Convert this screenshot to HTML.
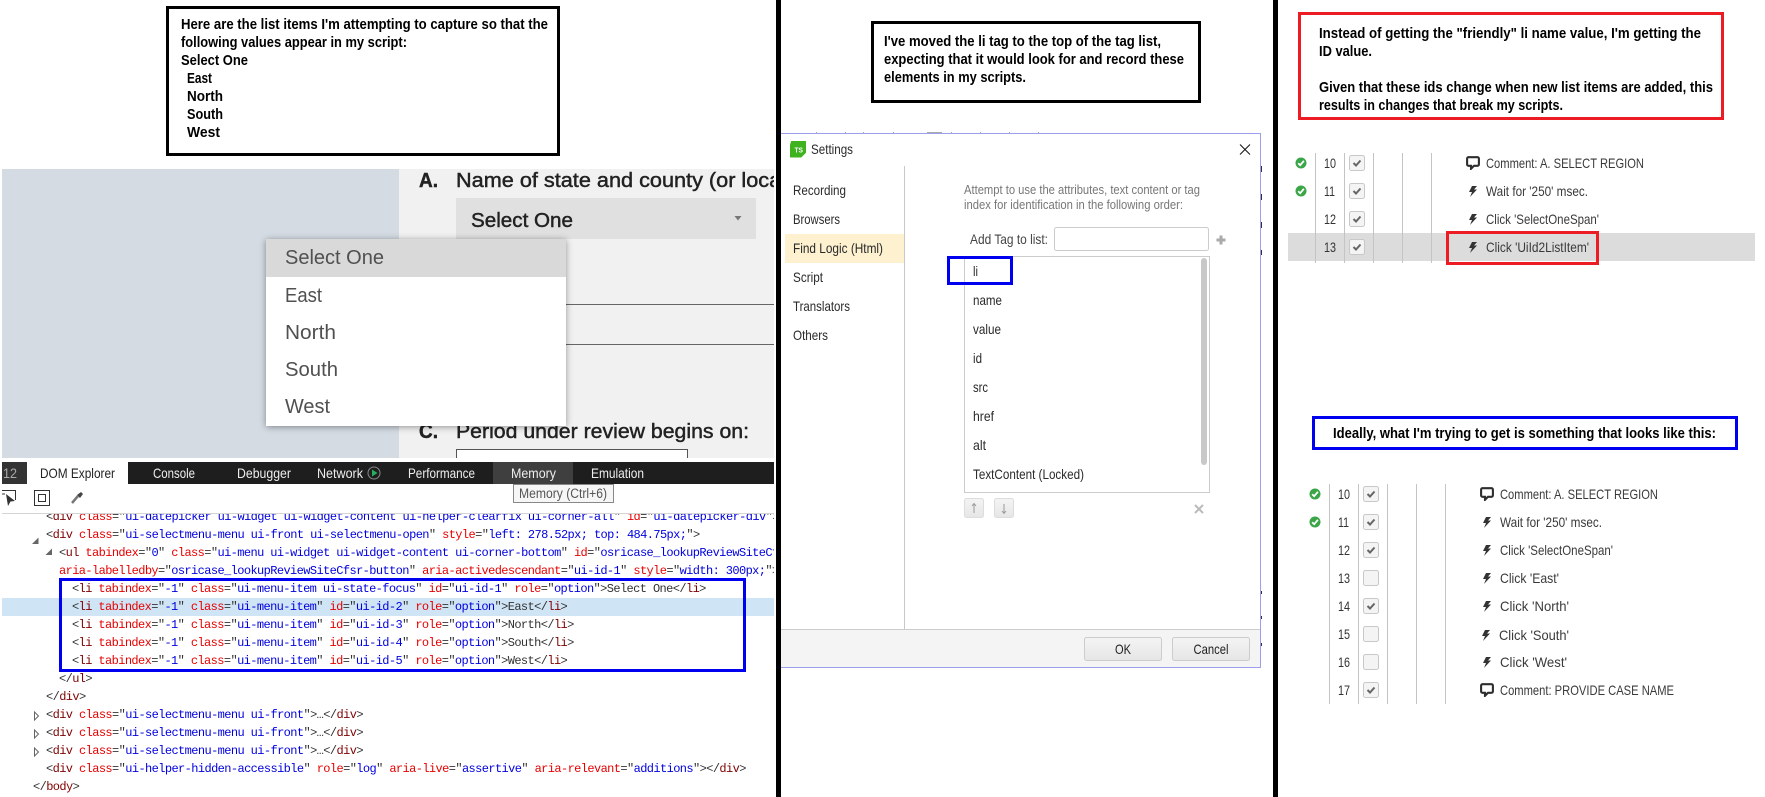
<!DOCTYPE html>
<html><head><meta charset="utf-8"><title>Screenshot</title>
<style>
html,body{margin:0;padding:0;background:#fff;width:1765px;height:797px;overflow:hidden}
svg{display:block;position:absolute;left:0;top:0}
text{font-family:"Liberation Sans",sans-serif;white-space:pre}
.b{font-weight:bold;font-size:15px;fill:#000}
.m{font-family:"Liberation Mono",monospace;font-size:12px;letter-spacing:-.6px;fill:#333}
.t{fill:#800000}.a{fill:#e80000}.v{fill:#0000e0}
.f{font-size:20px;fill:#222;stroke:#222;stroke-width:.45}
.d{font-size:20.5px;fill:#505050}
.w{font-size:14px;fill:#eee}
.s{font-size:14px;fill:#2a2a2a}
.n{font-size:14px;fill:#333}
.st{font-size:14px;fill:#3a3a3a}
</style></head><body>
<svg width="1765" height="797" viewBox="0 0 1765 797" xmlns="http://www.w3.org/2000/svg">
<defs>
<clipPath id="cl"><rect x="0" y="0" width="774" height="797"/></clipPath>
<clipPath id="cc"><rect x="0" y="514" width="774" height="283"/></clipPath>
<symbol id="bub" width="14" height="14" viewBox="0 0 14 14"><path d="M2.5 1.2h9A1.4 1.4 0 0 1 12.9 2.6v5.800A1.400 1.400 0 0 1 11.500 9.800H8l-3 3v-3H2.500A1.400 1.400 0 0 1 1.100 8.400V2.600A1.400 1.400 0 0 1 2.500 1.200z" fill="#fff" stroke="#2e2e2e" stroke-width="2.100"/></symbol>
<symbol id="bolt" width="8" height="11" viewBox="0 0 8 11"><polygon points="3,0 8,0 5,3.500 8,3.500 1,11 3,6 0,6" fill="#333"/></symbol>
<symbol id="ok" width="12" height="12" viewBox="0 0 12 12"><circle cx="6" cy="6" r="5.500" fill="#3aa648"/><polyline points="3.200,6.200 5.200,8.200 8.900,3.800" fill="none" stroke="#fff" stroke-width="1.800"/></symbol>
<symbol id="cb" width="16" height="16" viewBox="0 0 16 16"><rect x=".5" y=".5" width="15" height="15" rx="2" fill="#f4f4f4" stroke="#c8c8c8"/></symbol>
<symbol id="cbc" width="16" height="16" viewBox="0 0 16 16"><rect x=".5" y=".5" width="15" height="15" rx="2" fill="#f4f4f4" stroke="#c8c8c8"/><polyline points="4.500,8 7,10.500 11.500,5.500" fill="none" stroke="#666" stroke-width="2"/></symbol>
<linearGradient id="g" x1="0" y1="0" x2="0" y2="1"><stop offset="0" stop-color="#f4f4f4"/><stop offset="1" stop-color="#e6e6e6"/></linearGradient>
<filter id="sh" x="-10%" y="-10%" width="120%" height="120%"><feDropShadow dx="0" dy="1" stdDeviation="3.500" flood-color="#000" flood-opacity=".4"/></filter>
</defs>

<!-- separators -->
<rect x="776" y="0" width="5" height="797" fill="#000"/>
<rect x="1273" y="0" width="5" height="797" fill="#000"/>

<!-- Box 1 -->
<rect x="167.500" y="7.500" width="391" height="147" fill="#fff" stroke="#000" stroke-width="3"/>
<text class="b" x="181" y="29" textLength="367" lengthAdjust="spacingAndGlyphs">Here are the list items I'm attempting to capture so that the</text>
<text class="b" x="181" y="47" textLength="226" lengthAdjust="spacingAndGlyphs">following values appear in my script:</text>
<text class="b" x="181" y="65" textLength="67" lengthAdjust="spacingAndGlyphs">Select One</text>
<text class="b" x="187" y="83" textLength="25" lengthAdjust="spacingAndGlyphs">East</text>
<text class="b" x="187" y="101" textLength="36" lengthAdjust="spacingAndGlyphs">North</text>
<text class="b" x="187" y="119" textLength="36" lengthAdjust="spacingAndGlyphs">South</text>
<text class="b" x="187" y="137" textLength="33" lengthAdjust="spacingAndGlyphs">West</text>

<!-- page mock -->
<rect x="2" y="169" width="397" height="289" fill="#d4dbe3"/>
<rect x="399" y="169" width="375" height="289" fill="#f1f1f1"/>
<g clip-path="url(#cl)">
<text class="f" x="419" y="187" style="font-weight:bold" textLength="19" lengthAdjust="spacingAndGlyphs">A.</text>
<text class="f" x="456" y="187" textLength="330" lengthAdjust="spacingAndGlyphs">Name of state and county (or local</text>
<rect x="456" y="198" width="300" height="41" fill="#e0e0e0"/>
<text class="f" x="471" y="227" textLength="102" lengthAdjust="spacingAndGlyphs">Select One</text>
<polygon points="734.500,216 741.500,216 738,220.500" fill="#777"/>
<rect x="566" y="304" width="208" height="1" fill="#666"/>
<rect x="566" y="344" width="208" height="1" fill="#666"/>
<text class="f" x="419" y="438" style="font-weight:bold" textLength="19" lengthAdjust="spacingAndGlyphs">C.</text>
<text class="f" x="456" y="438" textLength="293" lengthAdjust="spacingAndGlyphs">Period under review begins on:</text>
<path d="M456.500 458V449.500H687.500V458" fill="#fff" stroke="#555"/>
</g>
<rect x="266" y="239" width="300" height="187" fill="#fff" filter="url(#sh)"/>
<rect x="266" y="239" width="300" height="38" fill="#d9d9d9"/>
<text class="d" x="285" y="264" textLength="99" lengthAdjust="spacingAndGlyphs">Select One</text>
<text class="d" x="285" y="302" textLength="37" lengthAdjust="spacingAndGlyphs">East</text>
<text class="d" x="285" y="339" textLength="51" lengthAdjust="spacingAndGlyphs">North</text>
<text class="d" x="285" y="376" textLength="53" lengthAdjust="spacingAndGlyphs">South</text>
<text class="d" x="285" y="413" textLength="45" lengthAdjust="spacingAndGlyphs">West</text>

<!-- F12 tabs -->
<rect x="2" y="462" width="772" height="22" fill="#1e1e1e"/>
<rect x="2" y="462" width="25" height="22" fill="#333"/>
<text class="w" x="3" y="478" textLength="14" lengthAdjust="spacingAndGlyphs" style="fill:#aaa">12</text>
<rect x="27" y="462" width="101" height="22" fill="#fff"/>
<text class="s" x="40" y="478" textLength="75" lengthAdjust="spacingAndGlyphs" style="fill:#222">DOM Explorer</text>
<text class="w" x="153" y="478" textLength="42" lengthAdjust="spacingAndGlyphs">Console</text>
<text class="w" x="237" y="478" textLength="54" lengthAdjust="spacingAndGlyphs">Debugger</text>
<text class="w" x="317" y="478" textLength="46" lengthAdjust="spacingAndGlyphs">Network</text>
<circle cx="374" cy="473" r="6" fill="none" stroke="#888"/>
<polygon points="372,469.500 372,476.500 377.500,473" fill="#27ae60"/>
<text class="w" x="408" y="478" textLength="67" lengthAdjust="spacingAndGlyphs">Performance</text>
<rect x="493" y="462" width="80" height="22" fill="#3f3f3f"/>
<text class="w" x="511" y="478" textLength="45" lengthAdjust="spacingAndGlyphs">Memory</text>
<text class="w" x="591" y="478" textLength="53" lengthAdjust="spacingAndGlyphs">Emulation</text>
<rect x="513.500" y="484.500" width="100" height="18" fill="#f6f6f6" stroke="#888"/>
<text x="519" y="498" font-size="13.500" fill="#555" textLength="88" lengthAdjust="spacingAndGlyphs">Memory (Ctrl+6)</text>

<!-- toolbar icons -->
<path d="M2 490.500H15.500V500" fill="none" stroke="#333"/>
<path d="M2 494H5" stroke="#333" fill="none"/>
<polygon points="6,494 15,501 10.500,501.500 8,506" fill="#333"/>
<rect x="34.500" y="490.500" width="15" height="15" fill="none" stroke="#333"/>
<rect x="38.500" y="494.500" width="7" height="7" fill="none" stroke="#333"/>
<path d="M72 503l6-7" stroke="#777" stroke-width="2.500" fill="none"/>
<path d="M77 495l4-3 2 2-3 4z" fill="#444"/>
<rect x="2" y="513" width="772" height="1" fill="#d4d4d4"/>

<!-- DOM tree -->
<rect x="2" y="598" width="772" height="18" fill="#cfe4f4"/>
<g clip-path="url(#cc)">
<text class="m" x="46" y="520">&lt;<tspan class="t">div</tspan> <tspan class="a">class</tspan>="<tspan class="v">ui-datepicker ui-widget ui-widget-content ui-helper-clearfix ui-corner-all</tspan>" <tspan class="a">id</tspan>="<tspan class="v">ui-datepicker-div</tspan>"&gt;</text>
<polygon points="32,544 38.500,537.500 38.500,544" fill="#666"/>
<text class="m" x="46" y="538">&lt;<tspan class="t">div</tspan> <tspan class="a">class</tspan>="<tspan class="v">ui-selectmenu-menu ui-front ui-selectmenu-open</tspan>" <tspan class="a">style</tspan>="<tspan class="v">left: 278.52px; top: 484.75px;</tspan>"&gt;</text>
<polygon points="45.500,555 52,548.500 52,555" fill="#666"/>
<text class="m" x="59" y="556">&lt;<tspan class="t">ul</tspan> <tspan class="a">tabindex</tspan>="<tspan class="v">0</tspan>" <tspan class="a">class</tspan>="<tspan class="v">ui-menu ui-widget ui-widget-content ui-corner-bottom</tspan>" <tspan class="a">id</tspan>="<tspan class="v">osricase_lookupReviewSiteCfsr-menu</tspan>"</text>
<text class="m" x="59" y="574"><tspan class="a">aria-labelledby</tspan>="<tspan class="v">osricase_lookupReviewSiteCfsr-button</tspan>" <tspan class="a">aria-activedescendant</tspan>="<tspan class="v">ui-id-1</tspan>" <tspan class="a">style</tspan>="<tspan class="v">width: 300px;</tspan>"&gt;</text>
<text class="m" x="72" y="592">&lt;<tspan class="t">li</tspan> <tspan class="a">tabindex</tspan>="<tspan class="v">-1</tspan>" <tspan class="a">class</tspan>="<tspan class="v">ui-menu-item ui-state-focus</tspan>" <tspan class="a">id</tspan>="<tspan class="v">ui-id-1</tspan>" <tspan class="a">role</tspan>="<tspan class="v">option</tspan>"&gt;Select One&lt;/<tspan class="t">li</tspan>&gt;</text>
<text class="m" x="72" y="610">&lt;<tspan class="t">li</tspan> <tspan class="a">tabindex</tspan>="<tspan class="v">-1</tspan>" <tspan class="a">class</tspan>="<tspan class="v">ui-menu-item</tspan>" <tspan class="a">id</tspan>="<tspan class="v">ui-id-2</tspan>" <tspan class="a">role</tspan>="<tspan class="v">option</tspan>"&gt;East&lt;/<tspan class="t">li</tspan>&gt;</text>
<text class="m" x="72" y="628">&lt;<tspan class="t">li</tspan> <tspan class="a">tabindex</tspan>="<tspan class="v">-1</tspan>" <tspan class="a">class</tspan>="<tspan class="v">ui-menu-item</tspan>" <tspan class="a">id</tspan>="<tspan class="v">ui-id-3</tspan>" <tspan class="a">role</tspan>="<tspan class="v">option</tspan>"&gt;North&lt;/<tspan class="t">li</tspan>&gt;</text>
<text class="m" x="72" y="646">&lt;<tspan class="t">li</tspan> <tspan class="a">tabindex</tspan>="<tspan class="v">-1</tspan>" <tspan class="a">class</tspan>="<tspan class="v">ui-menu-item</tspan>" <tspan class="a">id</tspan>="<tspan class="v">ui-id-4</tspan>" <tspan class="a">role</tspan>="<tspan class="v">option</tspan>"&gt;South&lt;/<tspan class="t">li</tspan>&gt;</text>
<text class="m" x="72" y="664">&lt;<tspan class="t">li</tspan> <tspan class="a">tabindex</tspan>="<tspan class="v">-1</tspan>" <tspan class="a">class</tspan>="<tspan class="v">ui-menu-item</tspan>" <tspan class="a">id</tspan>="<tspan class="v">ui-id-5</tspan>" <tspan class="a">role</tspan>="<tspan class="v">option</tspan>"&gt;West&lt;/<tspan class="t">li</tspan>&gt;</text>
<text class="m" x="59" y="682">&lt;/<tspan class="t">ul</tspan>&gt;</text>
<text class="m" x="46" y="700">&lt;/<tspan class="t">div</tspan>&gt;</text>
<polygon points="34.500,712 38.500,716 34.500,720" fill="none" stroke="#666"/>
<text class="m" x="46" y="718">&lt;<tspan class="t">div</tspan> <tspan class="a">class</tspan>="<tspan class="v">ui-selectmenu-menu ui-front</tspan>"&gt;…&lt;/<tspan class="t">div</tspan>&gt;</text>
<polygon points="34.500,730 38.500,734 34.500,738" fill="none" stroke="#666"/>
<text class="m" x="46" y="736">&lt;<tspan class="t">div</tspan> <tspan class="a">class</tspan>="<tspan class="v">ui-selectmenu-menu ui-front</tspan>"&gt;…&lt;/<tspan class="t">div</tspan>&gt;</text>
<polygon points="34.500,748 38.500,752 34.500,756" fill="none" stroke="#666"/>
<text class="m" x="46" y="754">&lt;<tspan class="t">div</tspan> <tspan class="a">class</tspan>="<tspan class="v">ui-selectmenu-menu ui-front</tspan>"&gt;…&lt;/<tspan class="t">div</tspan>&gt;</text>
<text class="m" x="46" y="772">&lt;<tspan class="t">div</tspan> <tspan class="a">class</tspan>="<tspan class="v">ui-helper-hidden-accessible</tspan>" <tspan class="a">role</tspan>="<tspan class="v">log</tspan>" <tspan class="a">aria-live</tspan>="<tspan class="v">assertive</tspan>" <tspan class="a">aria-relevant</tspan>="<tspan class="v">additions</tspan>"&gt;&lt;/<tspan class="t">div</tspan>&gt;</text>
<text class="m" x="33" y="790">&lt;/<tspan class="t">body</tspan>&gt;</text>
</g>
<rect x="60.500" y="579.500" width="684" height="91" fill="none" stroke="#0000f0" stroke-width="3"/>

<!-- Box 2 -->
<rect x="872.500" y="22.500" width="327" height="79" fill="#fff" stroke="#000" stroke-width="3"/>
<text class="b" x="884" y="46" textLength="277" lengthAdjust="spacingAndGlyphs">I've moved the li tag to the top of the tag list,</text>
<text class="b" x="884" y="64" textLength="300" lengthAdjust="spacingAndGlyphs">expecting that it would look for and record these</text>
<text class="b" x="884" y="82" textLength="142" lengthAdjust="spacingAndGlyphs">elements in my scripts.</text>

<!-- Settings dialog -->
<path d="M781 133.500H1260.500V667.500H781" fill="#fff" stroke="#9c9ef0"/>
<g fill="#aaa">
<rect x="816" y="132" width="1" height="1"/><rect x="845" y="132" width="1" height="1"/><rect x="863" y="132" width="1" height="1"/><rect x="893" y="132" width="1" height="1"/><rect x="927" y="132" width="15" height="1"/><rect x="951" y="132" width="1" height="1"/><rect x="980" y="132" width="1" height="1"/><rect x="1009" y="132" width="1" height="1"/><rect x="1038" y="132" width="1" height="1"/>
</g>
<g fill="#333">
<rect x="1261" y="166" width="1" height="6"/><rect x="1261" y="194" width="1" height="6"/><rect x="1261" y="222" width="1" height="6"/><rect x="1261" y="250" width="1" height="5"/><rect x="1261" y="591" width="1" height="3"/><rect x="1261" y="616" width="1" height="3"/><rect x="1261" y="643" width="1" height="3"/>
</g>
<path d="M791.500 141.500h14v11l-4.500 4.500H790.500v-12z" fill="#3fb31f" stroke="#3fb31f" stroke-linejoin="round"/>
<text x="794.500" y="152.500" font-size="7.500" font-weight="bold" fill="#fff" textLength="8.500" lengthAdjust="spacingAndGlyphs">TS</text>
<text class="s" x="811" y="154" textLength="42" lengthAdjust="spacingAndGlyphs">Settings</text>
<path d="M1240 144.500l10 10M1250 144.500l-10 10" stroke="#111" stroke-width="1" fill="none"/>
<rect x="904" y="166" width="1" height="463" fill="#c8c8c8"/>
<rect x="785" y="234" width="119" height="29" fill="#fdf1d0"/>
<text class="s" x="793" y="195" textLength="53" lengthAdjust="spacingAndGlyphs">Recording</text>
<text class="s" x="793" y="224" textLength="47" lengthAdjust="spacingAndGlyphs">Browsers</text>
<text class="s" x="793" y="253" textLength="90" lengthAdjust="spacingAndGlyphs">Find Logic (Html)</text>
<text class="s" x="793" y="282" textLength="30" lengthAdjust="spacingAndGlyphs">Script</text>
<text class="s" x="793" y="311" textLength="57" lengthAdjust="spacingAndGlyphs">Translators</text>
<text class="s" x="793" y="340" textLength="35" lengthAdjust="spacingAndGlyphs">Others</text>
<text x="964" y="194" font-size="13" fill="#777" textLength="236" lengthAdjust="spacingAndGlyphs">Attempt to use the attributes, text content or tag</text>
<text x="964" y="209" font-size="13" fill="#777" textLength="219" lengthAdjust="spacingAndGlyphs">index for identification in the following order:</text>
<text class="s" x="970" y="244" textLength="78" lengthAdjust="spacingAndGlyphs" style="fill:#444">Add Tag to list:</text>
<rect x="1054.500" y="227.500" width="154" height="23" rx="2" fill="#fff" stroke="#ccc"/>
<path d="M1221 235.500v9M1216.500 240h9" stroke="#aaa" stroke-width="3" fill="none"/>
<rect x="964.500" y="256.500" width="245" height="236" fill="#fff" stroke="#ccc"/>
<rect x="1201" y="258" width="6" height="207" rx="3" fill="#c8c8c8"/>
<rect x="948.500" y="257.500" width="63" height="26" fill="none" stroke="#0000f0" stroke-width="3"/>
<text class="s" x="973" y="276" textLength="5" lengthAdjust="spacingAndGlyphs">li</text>
<text class="s" x="973" y="305" textLength="29" lengthAdjust="spacingAndGlyphs">name</text>
<text class="s" x="973" y="334" textLength="28" lengthAdjust="spacingAndGlyphs">value</text>
<text class="s" x="973" y="363" textLength="9" lengthAdjust="spacingAndGlyphs">id</text>
<text class="s" x="973" y="392" textLength="15" lengthAdjust="spacingAndGlyphs">src</text>
<text class="s" x="973" y="421" textLength="21" lengthAdjust="spacingAndGlyphs">href</text>
<text class="s" x="973" y="450" textLength="13" lengthAdjust="spacingAndGlyphs">alt</text>
<text class="s" x="973" y="479" textLength="111" lengthAdjust="spacingAndGlyphs">TextContent (Locked)</text>
<rect x="964.500" y="498.500" width="19" height="19" rx="2" fill="url(#g)" stroke="#ddd"/>
<rect x="994.500" y="498.500" width="19" height="19" rx="2" fill="url(#g)" stroke="#ddd"/>
<path d="M974 513v-9M972 506l2-2.500 2 2.500" fill="none" stroke="#999"/>
<path d="M1004 504v9M1002 511l2 2.500 2-2.500" fill="none" stroke="#999"/>
<path d="M1195 505l8 8M1203 505l-8 8" stroke="#bbb" stroke-width="2" fill="none"/>
<rect x="781" y="629" width="479" height="1" fill="#ccc"/>
<rect x="781" y="630" width="479" height="37" fill="#f4f4f4"/>
<rect x="1084.500" y="637.500" width="77" height="23" rx="2" fill="url(#g)" stroke="#ccc"/>
<rect x="1172.500" y="637.500" width="77" height="23" rx="2" fill="url(#g)" stroke="#ccc"/>
<text class="s" x="1115" y="654" textLength="16" lengthAdjust="spacingAndGlyphs" style="fill:#222">OK</text>
<text class="s" x="1193.500" y="654" textLength="35" lengthAdjust="spacingAndGlyphs" style="fill:#222">Cancel</text>

<!-- Red box -->
<rect x="1299.500" y="13.500" width="423" height="105" fill="#fff" stroke="#ed1c24" stroke-width="3"/>
<text class="b" x="1319" y="38" textLength="382" lengthAdjust="spacingAndGlyphs">Instead of getting the "friendly" li name value, I'm getting the</text>
<text class="b" x="1319" y="56" textLength="53" lengthAdjust="spacingAndGlyphs">ID value.</text>
<text class="b" x="1319" y="92" textLength="394" lengthAdjust="spacingAndGlyphs">Given that these ids change when new list items are added, this</text>
<text class="b" x="1319" y="110" textLength="244" lengthAdjust="spacingAndGlyphs">results in changes that break my scripts.</text>

<!-- Table 1 -->
<rect x="1288" y="233" width="467" height="28" fill="#dcdcdc"/>
<g fill="#c4c4c4">
<rect x="1315" y="153" width="1" height="110"/><rect x="1344" y="153" width="1" height="110"/><rect x="1373" y="153" width="1" height="110"/><rect x="1402" y="153" width="1" height="110"/><rect x="1431" y="153" width="1" height="110"/>
</g>
<use href="#ok" x="1295" y="157"/><use href="#ok" x="1295" y="185"/>
<text class="n" x="1324" y="168" textLength="12" lengthAdjust="spacingAndGlyphs">10</text>
<text class="n" x="1324" y="196" textLength="11" lengthAdjust="spacingAndGlyphs">11</text>
<text class="n" x="1324" y="224" textLength="12" lengthAdjust="spacingAndGlyphs">12</text>
<text class="n" x="1324" y="252" textLength="12" lengthAdjust="spacingAndGlyphs">13</text>
<use href="#cbc" x="1349" y="155"/><use href="#cbc" x="1349" y="183"/><use href="#cbc" x="1349" y="211"/><use href="#cbc" x="1349" y="239"/>
<use href="#bub" x="1466" y="156"/><use href="#bolt" x="1469" y="186"/><use href="#bolt" x="1469" y="214"/><use href="#bolt" x="1469" y="242"/>
<text class="st" x="1486" y="168" textLength="158" lengthAdjust="spacingAndGlyphs">Comment: A. SELECT REGION</text>
<text class="st" x="1486" y="196" textLength="102" lengthAdjust="spacingAndGlyphs">Wait for '250' msec.</text>
<text class="st" x="1486" y="224" textLength="113" lengthAdjust="spacingAndGlyphs">Click 'SelectOneSpan'</text>
<text class="st" x="1486" y="252" textLength="103" lengthAdjust="spacingAndGlyphs">Click 'UiId2ListItem'</text>
<rect x="1447.500" y="232.500" width="150" height="31" fill="none" stroke="#ed1c24" stroke-width="3"/>

<!-- Blue box -->
<rect x="1313.500" y="417.500" width="423" height="31" fill="#fff" stroke="#0000f0" stroke-width="3"/>
<text class="b" x="1333" y="438" textLength="383" lengthAdjust="spacingAndGlyphs">Ideally, what I'm trying to get is something that looks like this:</text>

<!-- Table 2 -->
<g fill="#c4c4c4">
<rect x="1329" y="484" width="1" height="220"/><rect x="1358" y="484" width="1" height="220"/><rect x="1387" y="484" width="1" height="220"/><rect x="1416" y="484" width="1" height="220"/><rect x="1445" y="484" width="1" height="220"/>
</g>
<use href="#ok" x="1309" y="488"/><use href="#ok" x="1309" y="516"/>
<text class="n" x="1338" y="499" textLength="12" lengthAdjust="spacingAndGlyphs">10</text>
<text class="n" x="1338" y="527" textLength="11" lengthAdjust="spacingAndGlyphs">11</text>
<text class="n" x="1338" y="555" textLength="12" lengthAdjust="spacingAndGlyphs">12</text>
<text class="n" x="1338" y="583" textLength="12" lengthAdjust="spacingAndGlyphs">13</text>
<text class="n" x="1338" y="611" textLength="12" lengthAdjust="spacingAndGlyphs">14</text>
<text class="n" x="1338" y="639" textLength="12" lengthAdjust="spacingAndGlyphs">15</text>
<text class="n" x="1338" y="667" textLength="12" lengthAdjust="spacingAndGlyphs">16</text>
<text class="n" x="1338" y="695" textLength="12" lengthAdjust="spacingAndGlyphs">17</text>
<use href="#cbc" x="1363" y="486"/><use href="#cbc" x="1363" y="514"/><use href="#cbc" x="1363" y="542"/><use href="#cb" x="1363" y="570"/><use href="#cbc" x="1363" y="598"/><use href="#cb" x="1363" y="626"/><use href="#cb" x="1363" y="654"/><use href="#cbc" x="1363" y="682"/>
<use href="#bub" x="1480" y="487"/><use href="#bolt" x="1483" y="517"/><use href="#bolt" x="1483" y="545"/><use href="#bolt" x="1483" y="573"/><use href="#bolt" x="1483" y="601"/><use href="#bolt" x="1482" y="630"/><use href="#bolt" x="1483" y="657"/><use href="#bub" x="1480" y="683"/>
<text class="st" x="1500" y="499" textLength="158" lengthAdjust="spacingAndGlyphs">Comment: A. SELECT REGION</text>
<text class="st" x="1500" y="527" textLength="102" lengthAdjust="spacingAndGlyphs">Wait for '250' msec.</text>
<text class="st" x="1500" y="555" textLength="113" lengthAdjust="spacingAndGlyphs">Click 'SelectOneSpan'</text>
<text class="st" x="1500" y="583" textLength="59" lengthAdjust="spacingAndGlyphs">Click 'East'</text>
<text class="st" x="1500" y="611" textLength="69" lengthAdjust="spacingAndGlyphs">Click 'North'</text>
<text class="st" x="1499" y="640" textLength="70" lengthAdjust="spacingAndGlyphs">Click 'South'</text>
<text class="st" x="1500" y="667" textLength="67" lengthAdjust="spacingAndGlyphs">Click 'West'</text>
<text class="st" x="1500" y="695" textLength="174" lengthAdjust="spacingAndGlyphs">Comment: PROVIDE CASE NAME</text>
</svg>
</body></html>
